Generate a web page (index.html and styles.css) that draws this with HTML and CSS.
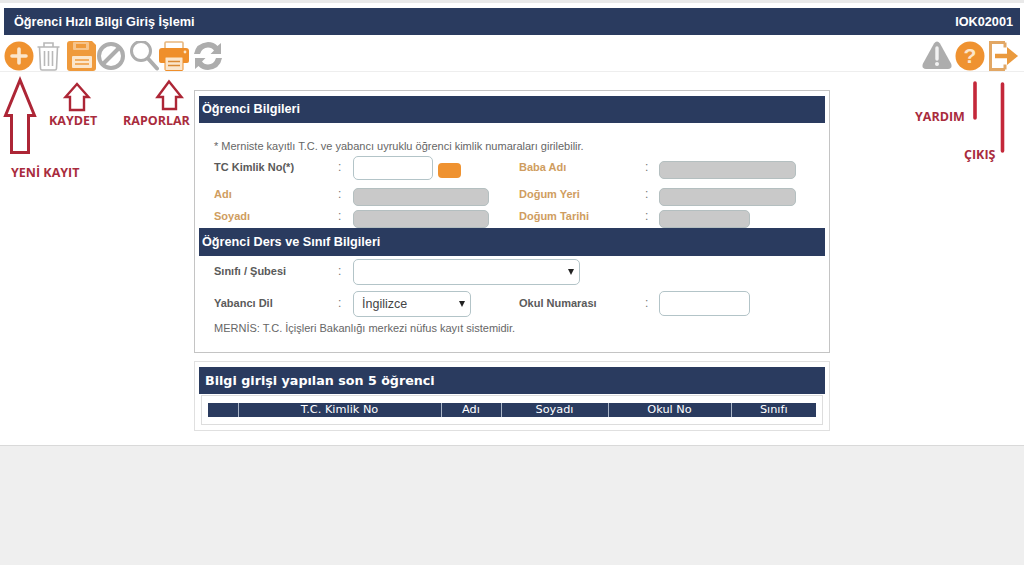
FILE: index.html

```html
<!DOCTYPE html>
<html lang="tr">
<head>
    <title>Öğrenci Hızlı Bilgi Giriş İşlemi</title>
    <meta charset="utf-8">
    <link rel="stylesheet" href="styles.css">
</head>
<body>
    <div class="page">
        <div class="title-bar">
            <span>Öğrenci Hızlı Bilgi Giriş İşlemi</span>
            <span>IOK02001</span>
        </div>

        <div class="toolbar">
            <div class="tool-group">
                <svg width="33" height="30" viewBox="0 0 33 30"><circle cx="15" cy="15" r="14.5" fill="#ef9230"/><path d="M15 8v14M8 15h14" stroke="#fbe6cc" stroke-width="3.6" stroke-linecap="round"/></svg>
                <svg width="30" height="30" viewBox="0 0 30 30" fill="none" stroke="#b8b8b8" stroke-width="1.6"><path d="M0.5 6h22M7 6V2h9v4M2.500 6l1 21.500q.1 1.500 1.500 1.500h13q1.400 0 1.500-1.500l1-21.500M7.500 10v15M11.500 10v15M15.500 10v15"/></svg>
                <svg width="30" height="30" viewBox="0 0 30 30"><path d="M3 0h22l4 4v23q0 3-3 3H3q-3 0-3-3V3q0-3 3-3z" fill="#ef9a3c"/><rect x="6" y="1" width="16" height="8" rx="1" fill="#f6c48c"/><rect x="9" y="3" width="10" height="4" fill="#ef9a3c"/><rect x="5" y="15" width="20" height="12" rx="1" fill="#fbe6cc"/><path d="M8 19h14M8 23h14" stroke="#ef9a3c" stroke-width="1.600"/></svg>
                <svg width="33" height="30" viewBox="0 0 33 30" fill="none" stroke="#adadad" stroke-width="4"><circle cx="14" cy="15" r="12"/><path d="M6 23L22 7"/></svg>
                <svg width="29" height="30" viewBox="0 0 29 30" fill="none" stroke="#adadad"><circle cx="11" cy="10" r="9.500" stroke-width="3"/><path d="M18 17.500L27 27.500" stroke-width="4" stroke-linecap="round"/></svg>
                <svg width="34" height="30" viewBox="0 0 34 30"><rect x="6" y="1" width="18" height="9" rx="1" fill="none" stroke="#e8b77e" stroke-width="1.600"/><path d="M3 7h24q3 0 3 3v10q0 2-2 2H2q-2 0-2-2V10q0-3 3-3z" fill="#ef8f2b"/><circle cx="26" cy="11" r="1.400" fill="#fbe6cc"/><rect x="6" y="16" width="18" height="13.500" rx="1" fill="#fbe6cc" stroke="#ef8f2b"/><path d="M9 20.500h12M9 24.500h12" stroke="#d98a35" stroke-width="1.600"/></svg>
                <svg width="30" height="30" viewBox="0 0 30 30" fill="#adadad"><path d="M1 13Q3 2 15 1q6 0 9.500 4L28 2v11H17.500l3.500-3.500Q19 6.500 15 6.500 9 6.500 7 13z"/><path d="M29 17q-2 11-14 12-6 0-9.500-4L2 28V17h10.500L9 20.500q2 3 6 3 6 0 8-6.500z"/></svg>
            </div>
            <div class="tool-group">
                <svg width="33" height="30" viewBox="0 0 33 30"><path d="M12 2.500q3-4 6 0l11 20q2 5-3 5.500H4q-5-.5-3-5.500z" fill="#adadad"/><path d="M15 7v11" stroke="#f2f2f2" stroke-width="3.400" stroke-linecap="round"/><circle cx="15" cy="23" r="2" fill="#f2f2f2"/></svg>
                <svg width="34" height="30" viewBox="0 0 34 30"><circle cx="15" cy="15" r="14.500" fill="#ef9230"/><text x="15" y="22" class="help-mark">?</text></svg>
                <svg width="30" height="30" viewBox="0 0 30 30" fill="none" stroke="#e2a764" stroke-width="3"><path d="M16 1.500H1.500v27H16M16 1.500v5M16 28.500v-5"/><path d="M6 15h13" stroke="#ea9a3e" stroke-width="4.500"/><path d="M18 6l11 9-11 9z" fill="#ea9a3e" stroke="none"/></svg>
            </div>
        </div>

        <div class="panel form-panel">
            <div class="section-head">Öğrenci Bilgileri</div>
            <p class="note">* Merniste kayıtlı T.C. ve yabancı uyruklu öğrenci kimlik numaraları girilebilir.</p>

            <div class="form-row row-kimlik">
                <label>TC Kimlik No(*)</label>
                <span class="colon">:</span>
                <div class="field-with-btn">
                    <input type="text" class="field w-80 h-24">
                    <button type="button" class="search-btn"></button>
                </div>
                <label class="muted">Baba Adı</label>
                <span class="colon">:</span>
                <input type="text" class="field locked w-137 baba" disabled>
            </div>
            <div class="form-row row-ad">
                <label class="muted">Adı</label>
                <span class="colon">:</span>
                <input type="text" class="field locked w-136" disabled>
                <label class="muted">Doğum Yeri</label>
                <span class="colon">:</span>
                <input type="text" class="field locked w-137" disabled>
            </div>
            <div class="form-row row-soyad">
                <label class="muted">Soyadı</label>
                <span class="colon">:</span>
                <input type="text" class="field locked w-136" disabled>
                <label class="muted">Doğum Tarihi</label>
                <span class="colon">:</span>
                <input type="text" class="field locked w-91" disabled>
            </div>

            <div class="section-head ders-head">Öğrenci Ders ve Sınıf Bilgileri</div>

            <div class="form-row row-sinif">
                <label>Sınıfı / Şubesi</label>
                <span class="colon">:</span>
                <div class="select-wrap span-rest">
                    <select class="field w-227"><option></option></select>
                </div>
            </div>
            <div class="form-row row-dil">
                <label>Yabancı Dil</label>
                <span class="colon">:</span>
                <div class="select-wrap">
                    <select class="field w-118"><option>İngilizce</option></select>
                </div>
                <label>Okul Numarası</label>
                <span class="colon">:</span>
                <input type="text" class="field w-91 h-25">
            </div>
            <p class="note mernis">MERNİS: T.C. İçişleri Bakanlığı merkezi nüfus kayıt sistemidir.</p>
        </div>

        <div class="panel list-panel">
            <div class="section-head list-head">Bilgi girişi yapılan son 5 öğrenci</div>
            <div class="table-box">
                <table>
                    <thead>
                        <tr>
                            <th class="c-sel"></th>
                            <th class="c-tc">T.C. Kimlik No</th>
                            <th class="c-ad">Adı</th>
                            <th class="c-soyad">Soyadı</th>
                            <th class="c-no">Okul No</th>
                            <th>Sınıfı</th>
                        </tr>
                    </thead>
                </table>
            </div>
        </div>
    </div>

    <!-- kirmizi aciklama isaretleri -->
    <svg class="marks" width="1024" height="165" viewBox="0 0 1024 165" fill="none" stroke="#ad2636">
        <path d="M20 80L5.500 115.500H11.500V152.500H28.500V115.500H34.500z" stroke-width="3"/>
        <path d="M77 84L65.500 97H70V110H84V97H88.500z" stroke-width="2.400"/>
        <path d="M169 81.500L157.500 97H163V109H176V97H181.500z" stroke-width="2.400"/>
        <path d="M975 83V118M1002.500 84V151" stroke="#c4283a" stroke-width="3.600" stroke-linecap="round"/>
    </svg>
    <span class="mark-label m-kaydet">KAYDET</span>
    <span class="mark-label m-raporlar">RAPORLAR</span>
    <span class="mark-label m-yeni">YENİ KAYIT</span>
    <span class="mark-label m-yardim">YARDIM</span>
    <span class="mark-label m-cikis">ÇIKIŞ</span>
</body>
</html>
```

FILE: styles.css

```css
html, body {
    margin: 0;
    height: 565px;
    overflow: hidden;
}
body {
    position: relative;
    background-color: #efefef;
    font-family: "Liberation Sans", Arial, sans-serif;
    font-size: 12px;
    color: #555;
}
.page {
    box-sizing: border-box;
    height: 446px;
    padding-top: 5px;
    background-color: #fff;
    border-top: 3px solid #e9e9e9;
    border-bottom: 1px solid #d9d9d9;
}
.title-bar {
    display: flex;
    justify-content: space-between;
    align-items: center;
    height: 27px;
    margin: 0 4px;
    padding: 0 7px 0 10px;
    background-color: #2a3b5f;
    color: #fff;
    font-size: 12.7px;
    font-weight: bold;
}
.toolbar {
    display: flex;
    justify-content: space-between;
    box-sizing: border-box;
    height: 37px;
    padding: 6px 5px 0 4px;
    border-bottom: 1px solid #eee;
}
.tool-group {
    display: flex;
}
.help-mark {
    fill: #fbe6cc;
    font-family: "Liberation Sans", Arial, sans-serif;
    font-size: 21px;
    font-weight: bold;
    text-anchor: middle;
}
.panel {
    box-sizing: border-box;
    width: 636px;
    margin-left: 194px;
    padding: 5px 4px;
    border: 1px solid #c4c4c4;
}
.form-panel {
    height: 263px;
    margin-top: 18px;
}
.list-panel {
    height: 70px;
    margin-top: 8px;
    border-color: #e0e0e0;
}
.section-head {
    height: 27px;
    padding-left: 3px;
    background-color: #2a3b5f;
    color: #fff;
    font-size: 12.7px;
    font-weight: bold;
    line-height: 27px;
}
.ders-head {
    height: 28px;
    line-height: 28px;
}
.list-head {
    padding-left: 6px;
    font-family: "DejaVu Sans", Verdana, sans-serif;
    font-size: 12.7px;
}
.note {
    height: 14px;
    margin: 16px 0 3px 15px;
    font-size: 11px;
    line-height: 14px;
    color: #666;
}
.mernis {
    margin-top: 4px;
}
.form-row {
    display: grid;
    grid-template-columns: 124px 15px 166px 126px 14px 1fr;
    align-items: start;
    padding-left: 15px;
}
.form-row label {
    font-size: 11px;
    font-weight: bold;
    line-height: 12px;
    color: #5a5a5a;
}
.form-row label.muted {
    color: #cf9d60;
}
.colon {
    line-height: 12px;
    color: #777;
}
.row-kimlik {
    height: 32px;
}
.row-kimlik label, .row-kimlik .colon {
    margin-top: 5px;
}
.row-ad {
    height: 22px;
}
.row-soyad {
    height: 18px;
}
.row-sinif {
    height: 32px;
    margin-top: 3px;
}
.row-dil {
    height: 26px;
}
.row-sinif label, .row-sinif .colon, .row-dil label, .row-dil .colon {
    margin-top: 6px;
}
.field-with-btn {
    display: flex;
    gap: 5px;
}
.field {
    box-sizing: border-box;
    height: 18px;
    margin: 0;
    padding: 0 8px;
    background-color: #fff;
    border: 1px solid #b3c4c8;
    border-radius: 5px;
    font-family: "Liberation Sans", Arial, sans-serif;
    font-size: 12.5px;
    color: #444;
}
.locked {
    background-color: #c9c9c9;
    border-color: #b4bfc0;
}
.baba {
    margin-top: 5px;
}
.select-wrap {
    position: relative;
    width: fit-content;
}
.select-wrap::after {
    content: "";
    position: absolute;
    top: 10px;
    right: 6px;
    border-top: 6px solid #222;
    border-left: 3px solid transparent;
    border-right: 3px solid transparent;
}
select.field {
    display: block;
    height: 26px;
    appearance: none;
    padding-left: 8px;
}
.span-rest {
    grid-column: 3 / 7;
}
.w-80 { width: 80px; }
.w-91 { width: 91px; }
.w-118 { width: 118px; }
.w-136 { width: 136px; }
.w-137 { width: 137px; }
.w-227 { width: 227px; }
.h-24 { height: 24px; }
.h-25 { height: 25px; }
.search-btn {
    width: 23px;
    height: 15px;
    margin-top: 7px;
    padding: 0;
    background-color: #ef9230;
    border: none;
    border-radius: 4px;
}
.table-box {
    box-sizing: border-box;
    height: 30px;
    margin: 1px 2px 0;
    padding: 7px 6px;
    border: 1px solid #ddd;
}
table {
    width: 608px;
    border-collapse: collapse;
    table-layout: fixed;
}
th {
    box-sizing: border-box;
    height: 14px;
    padding: 0;
    background-color: #2a3b5f;
    border-left: 1px solid #a9b4c6;
    color: #fff;
    font-family: "DejaVu Sans", Verdana, sans-serif;
    font-size: 11.3px;
    font-weight: normal;
    line-height: 14px;
}
th:first-child {
    border-left: none;
}
.c-sel { width: 30px; }
.c-tc { width: 203px; }
.c-ad { width: 60px; }
.c-soyad { width: 107px; }
.c-no { width: 123px; }
.marks {
    position: absolute;
    top: 0;
    left: 0;
    pointer-events: none;
}
.mark-label {
    position: absolute;
    font-family: "Open Sans", "Liberation Sans", sans-serif;
    font-size: 12.5px;
    font-weight: bold;
    line-height: 14px;
    color: #a92c3d;
}
.m-kaydet { left: 49px; top: 114px; }
.m-raporlar { left: 123px; top: 114px; }
.m-yeni { left: 11px; top: 166px; }
.m-yardim { left: 915px; top: 110px; }
.m-cikis { left: 964px; top: 148px; }
```
